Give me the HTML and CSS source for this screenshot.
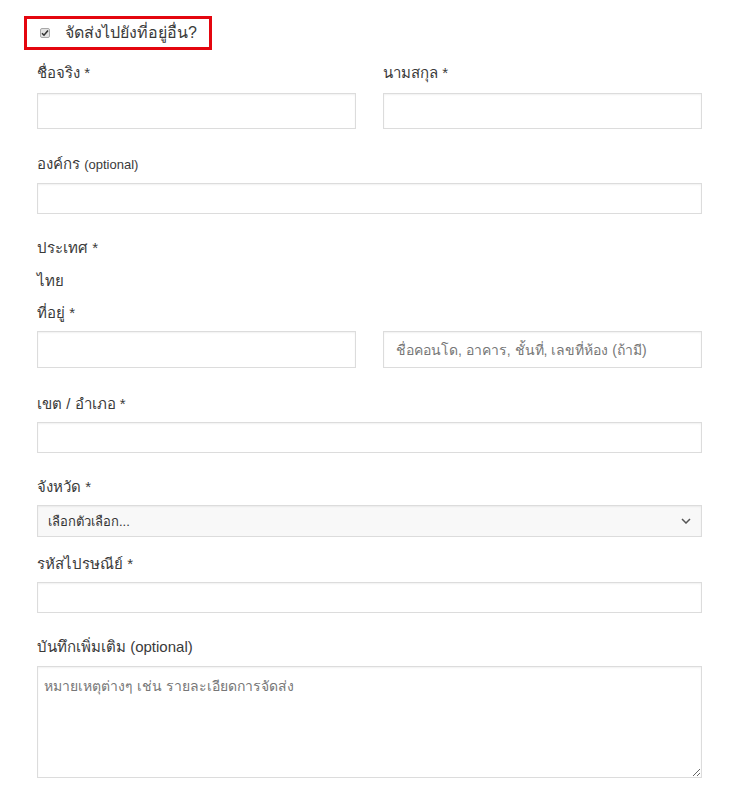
FILE: index.html
```html
<!DOCTYPE html>
<html lang="th">
  <head>
    <meta charset="UTF-8" />
    <meta name="viewport" content="width=device-width, initial-scale=1.0" />
    <title>ที่อยู่จัดส่ง</title>
    <link rel="stylesheet" href="styles.css">
  </head>
  <body>
    <div class="shipping">
      <h3 class="ship-toggle">
        <label class="ship-label">
          <input type="checkbox" class="ship-check" checked />
          <span>จัดส่งไปยังที่อยู่อื่น?</span>
        </label>
      </h3>

      <div class="fields">
        <div class="row-half">
          <p class="field">
            <label for="first_name">ชื่อจริง <abbr>*</abbr></label>
            <input type="text" id="first_name" />
          </p>
          <p class="field">
            <label for="last_name">นามสกุล <abbr>*</abbr></label>
            <input type="text" id="last_name" />
          </p>
        </div>

        <p class="field">
          <label for="company">องค์กร <span class="optional">(optional)</span></label>
          <input type="text" id="company" class="short" />
        </p>

        <p class="field country">
          <label>ประเทศ <abbr>*</abbr></label>
          <strong class="country-name">ไทย</strong>
        </p>

        <div class="field address">
          <label for="address_1">ที่อยู่ <abbr>*</abbr></label>
          <div class="row-half">
            <input type="text" id="address_1" />
            <input type="text" id="address_2" placeholder="ชื่อคอนโด, อาคาร, ชั้นที่, เลขที่ห้อง (ถ้ามี)" />
          </div>
        </div>

        <p class="field">
          <label for="city">เขต / อำเภอ <abbr>*</abbr></label>
          <input type="text" id="city" class="short" />
        </p>

        <p class="field state">
          <label for="state">จังหวัด <abbr>*</abbr></label>
          <select id="state">
            <option>เลือกตัวเลือก...</option>
          </select>
        </p>

        <p class="field">
          <label for="postcode">รหัสไปรษณีย์ <abbr>*</abbr></label>
          <input type="text" id="postcode" class="short" />
        </p>

        <p class="field notes">
          <label for="notes">บันทึกเพิ่มเติม <span class="optional">(optional)</span></label>
          <textarea id="notes" placeholder="หมายเหตุต่างๆ เช่น รายละเอียดการจัดส่ง"></textarea>
        </p>
      </div>
    </div>
  </body>
</html>
```

FILE: styles.css
```css
body {
  font-family: "Liberation Sans", "Noto Sans", sans-serif;
  font-size: 14px;
  line-height: 20px;
  margin: 0;
  background: #fff;
  color: #3a3a3a;
}
.shipping {
  padding: 16px 33px 0 37px;
}
.ship-toggle {
  display: inline-block;
  margin: 0 0 13px -13px;
  padding: 4px 12px 4px 13px;
  border: 3px solid #e4060f;
  font-size: 16px;
  font-weight: normal;
  line-height: 20px;
}
.ship-label {
  display: flex;
  align-items: center;
  gap: 15px;
}
.ship-check {
  appearance: none;
  -webkit-appearance: none;
  width: 10px;
  height: 10px;
  margin: 0;
  border: 1px solid #a8a8a8;
  border-radius: 2px;
  background: #e2e2e2 url("data:image/svg+xml,%3Csvg xmlns='http://www.w3.org/2000/svg' viewBox='0 0 10 10'%3E%3Cpath d='M2 5.2l2 2 4-4.6' fill='none' stroke='%23333' stroke-width='1.6'/%3E%3C/svg%3E") center / 10px 10px no-repeat;
}
.field {
  margin: 0 0 24px;
}
.field label {
  display: block;
  margin: 0 0 8px;
  font-size: 15px;
}
.field abbr {
  text-decoration: none;
}
.optional {
  font-size: 13px;
}
.notes .optional {
  font-size: 15px;
}
.row-half {
  display: grid;
  grid-template-columns: 1fr 1fr;
  gap: 27px;
}
.row-half .field {
  margin-bottom: 25px;
}
.row-half .field label {
  margin-bottom: 10px;
}
.country {
  margin-bottom: 12px;
}
.country label {
  margin-bottom: 13px;
}
.country-name {
  display: block;
  font-weight: normal;
  font-size: 15px;
}
.address {
  margin-bottom: 26px;
}
.state {
  margin-bottom: 17px;
}
.notes label {
  margin-bottom: 9px;
}
input[type="text"],
select,
textarea {
  display: block;
  width: 100%;
  box-sizing: border-box;
  height: 37px;
  margin: 0;
  padding: 6px 12px;
  border: 1px solid #dcdcdc;
  border-radius: 0;
  background: #fff;
  box-shadow: inset 0 1px 2px rgba(0, 0, 0, 0.06);
  font-family: inherit;
  font-size: 14px;
  color: #333;
}
.row-half:first-child input {
  height: 36px;
}
input.short {
  height: 31px;
}
input::placeholder,
textarea::placeholder {
  color: #777;
  opacity: 1;
}
select {
  appearance: none;
  -webkit-appearance: none;
  height: 32px;
  padding: 0 10px;
  font-size: 13px;
  background: #f8f8f8 url("data:image/svg+xml,%3Csvg xmlns='http://www.w3.org/2000/svg' viewBox='0 0 10 6'%3E%3Cpath d='M1 1l4 4 4-4' fill='none' stroke='%23555' stroke-width='1.5'/%3E%3C/svg%3E") right 10px center / 10px 6px no-repeat;
}
textarea {
  height: 112px;
  padding: 8px 6px;
  resize: vertical;
}
```
